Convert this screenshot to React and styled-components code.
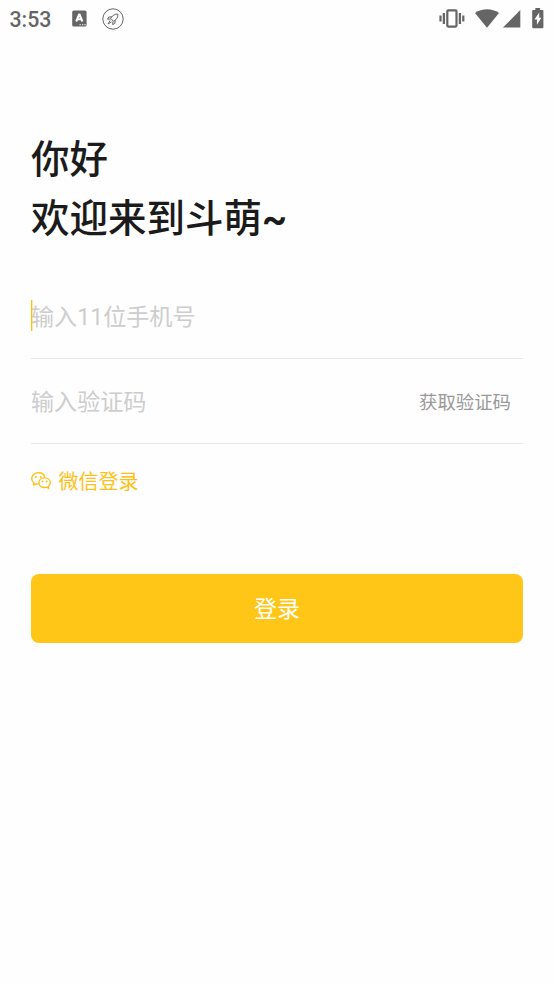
import React from 'react';
import styled, { createGlobalStyle } from 'styled-components';

const GlobalStyle = createGlobalStyle`
  * {
    box-sizing: border-box;
  }

  body {
    margin: 0;
    background: #fefefe;
    font-family: Roboto, "Noto Sans CJK SC", sans-serif;
  }
`;

const Page = styled.div`
  min-height: 984px;
  background: #fefefe;
`;

const StatusBar = styled.header`
  display: flex;
  align-items: center;
  justify-content: space-between;
  height: 37px;
  padding: 0 10px 0 9.5px;
  color: #656565;
`;

const StatusGroup = styled.div`
  display: flex;
  align-items: center;
  height: 37px;
`;

const Clock = styled.span`
  width: 62px;
  padding-top: 2px;
  font-size: 21.3px;
  font-weight: 500;
  line-height: 26px;
`;

const StatusIcon = styled.svg`
  display: block;
  flex: none;
  margin-left: ${(props) => props.$gap || 0}px;
`;

const Main = styled.main`
  padding: 93px 31px 0;
`;

const Title = styled.h1`
  margin: 0;
  color: #1b1b1b;
  font-size: 38.5px;
  font-weight: 500;
  line-height: 59px;
  white-space: nowrap;
`;

const Tilde = styled.span`
  font-weight: 700;
`;

const Form = styled.form`
  margin-top: 26px;
`;

const Field = styled.div`
  display: flex;
  align-items: center;
  justify-content: space-between;
  height: 85px;
  border-bottom: 1px solid #e7e7e7;
`;

const Placeholder = styled.span`
  padding-top: 3px;
  color: #cdcdcd;
  font-size: 23.1px;
  line-height: 32px;
`;

const Caret = styled.i`
  flex: none;
  width: 1px;
  height: 31px;
  margin: 0 -1px 2px 0;
  background: #ffc107;
  box-shadow: 1px 0 0 rgba(255, 193, 7, 0.35);
  z-index: 1;
`;

const FieldText = styled.div`
  display: flex;
  align-items: center;
`;

const CodeButton = styled.button`
  padding: 3px 12px 0 0;
  border: 0;
  background: none;
  color: #999;
  font-family: inherit;
  font-size: 18.4px;
  line-height: 28px;
`;

const WechatLogin = styled.a`
  display: flex;
  align-items: center;
  height: 30px;
  margin-top: 22px;
  color: #ffc016;
  font-size: 20px;
  line-height: 30px;
`;

const WechatIcon = styled.svg`
  display: block;
  margin-right: 7.5px;
`;

const WechatText = styled.span`
  padding-top: 2px;
`;

const LoginButton = styled.button`
  display: block;
  width: 100%;
  height: 69px;
  margin-top: 77.6px;
  padding: 2px 0 0;
  border: 0;
  border-radius: 8px;
  background: #ffc617;
  color: #fff;
  font-family: inherit;
  font-size: 23px;
  line-height: 67px;
`;

const App = () => {
  return (
    <Page>
      <GlobalStyle />
      <StatusBar>
        <StatusGroup>
          <Clock>3:53</Clock>
          <StatusIcon width="15" height="17" viewBox="0 0 15 17">
            <rect x="0.2" y="0.5" width="14.4" height="16" rx="1.6" fill="#656565" />
            <path d="M4.2 11.5 7.3 4 10.4 11.5M5.2 9.2H9.4" fill="none" stroke="#fff" strokeWidth="2" strokeLinejoin="bevel" />
            <path d="M7.5 14.7h1.3M10 14.7h1.3M12.4 14.7h1.3" stroke="#fff" strokeWidth="1.1" />
          </StatusIcon>
          <StatusIcon $gap={15} width="22" height="22" viewBox="0 0 22 22" fill="none" stroke="#656565">
            <circle cx="11" cy="11" r="10.2" strokeWidth="1" />
            <path d="M15.9 6.1c-3-.2-5.3 1.3-7.3 4.2l3.1 3.1c2.9-2 4.5-4.2 4.2-7.3ZM9.8 8.7 6.8 9 5.6 11.2l3-.2M13.2 12.3l-.3 3-2.2 1.4.2-3.3M8.2 12.4l-2.2 3.6 3.6-2.2" strokeWidth="1" strokeLinejoin="round" />
          </StatusIcon>
        </StatusGroup>
        <StatusGroup>
          <StatusIcon width="26" height="20" viewBox="0 0 26 20" fill="none" stroke="#656565">
            <rect x="8.3" y="1.4" width="9.2" height="16.2" rx="1" strokeWidth="2.2" />
            <path d="M4.9 4v11M20.9 4v11" strokeWidth="2.3" />
            <path d="M1.5 6.5v6M24.3 6.5v6" strokeWidth="2.2" />
          </StatusIcon>
          <StatusIcon $gap={10} width="24" height="19" viewBox="0 0 24 19">
            <path d="M12 18.8 0 4C7-1 17-1 24 4Z" fill="#656565" />
          </StatusIcon>
          <StatusIcon $gap={4} width="18" height="18" viewBox="0 0 18 18">
            <path d="M17.3 0v17.6H0Z" fill="#656565" />
          </StatusIcon>
          <StatusIcon $gap={11} width="12" height="21" viewBox="0 0 12 21">
            <path d="M3.3 0h4.8v2h2.3a1 1 0 0 1 1 1v16.2a1 1 0 0 1-1 1H1.2a1 1 0 0 1-1-1V3a1 1 0 0 1 1-1h2.1Z" fill="#656565" />
            <path d="M7.2 4.6 2.4 11.6h2.5v5.2L9.4 9.8H7.2Z" fill="#fff" />
          </StatusIcon>
        </StatusGroup>
      </StatusBar>
      <Main>
        <Title>
          你好
          <br />
          欢迎来到斗萌<Tilde>~</Tilde>
        </Title>
        <Form>
          <Field>
            <FieldText>
              <Caret />
              <Placeholder>输入11位手机号</Placeholder>
            </FieldText>
          </Field>
          <Field>
            <Placeholder>输入验证码</Placeholder>
            <CodeButton type="button">获取验证码</CodeButton>
          </Field>
          <WechatLogin>
            <WechatIcon width="20" height="18" viewBox="0 0 20 18" fill="none" stroke="#ffc016" strokeWidth="1.4" strokeLinejoin="round">
              <path d="M14 5.6C13.4 2.8 10.6.8 7.3.8 3.6.8.7 3.3.7 6.5c0 1.8.9 3.4 2.4 4.4l-.4 2.3 2.5-1.3c.8.2 1.6.3 2.5.2" />
              <path d="M13.6 5.9c-3.2 0-5.7 2.1-5.7 4.8s2.5 4.8 5.7 4.8c.8 0 1.4-.1 2.1-.3l2 1.2-.4-1.9c1.2-.9 2-2.2 2-3.8 0-2.7-2.5-4.8-5.7-4.8Z" />
              <g fill="#ffc016" stroke="none">
                <circle cx="4.9" cy="5" r="1.1" />
                <circle cx="9.6" cy="5" r="1.1" />
                <circle cx="11.6" cy="9.4" r="1" />
                <circle cx="15.6" cy="9.4" r="1" />
              </g>
            </WechatIcon>
            <WechatText>微信登录</WechatText>
          </WechatLogin>
          <LoginButton type="button">登录</LoginButton>
        </Form>
      </Main>
    </Page>
  );
};

export default App;
